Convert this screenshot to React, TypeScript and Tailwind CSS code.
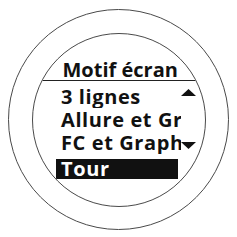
import type { ReactNode } from "react";

function UpArrow() {
  return (
    <svg width="15" height="7" viewBox="0 0 15 7" className="block">
      <polygon points="7.5,0 15,7 0,7" fill="#111" />
    </svg>
  );
}

function DownArrow() {
  return (
    <svg width="15" height="7" viewBox="0 0 15 7" className="block">
      <polygon points="0,0 15,0 7.5,7" fill="#111" />
    </svg>
  );
}

function Row({ label, arrow }: { label: string; arrow?: ReactNode }) {
  return (
    <div className="flex h-[23px]">
      <div className="w-[125px] overflow-hidden whitespace-nowrap pl-[5px] leading-[23px] tracking-[0.6px]">{label}</div>
      <div className="flex w-[16px] flex-col">{arrow}</div>
    </div>
  );
}

export default function App() {
  return (
    <div
      className="h-[237px] w-[237px] bg-white pl-[8px] pt-[9px] text-[#111]"
      style={{ fontFamily: '"Open Sans", "DejaVu Sans", sans-serif' }}
    >
      <div className="flex h-[221px] w-[221px] items-center justify-center rounded-full border-[1.5px] border-[#4a4a4a]">
        <div className="h-[174px] w-[174px] overflow-hidden rounded-full border-[1.5px] border-[#4a4a4a]">
          <div className="flex flex-col pt-[25px] text-[20px] font-bold">
            <div className="h-[21px] pl-[30px] leading-[21px]">Motif écran</div>
            <div className="h-[1.5px] w-full bg-[#222]" />
            <div className="mt-[3.5px] flex flex-col pl-[23.5px]">
              <Row
                label="3 lignes"
                arrow={
                  <div className="mt-[4px]">
                    <UpArrow />
                  </div>
                }
              />
              <Row label="Allure et Graphique" />
              <Row
                label="FC et Graphique"
                arrow={
                  <div className="mt-auto mb-[5px]">
                    <DownArrow />
                  </div>
                }
              />
              <div className="mt-[5px] h-[20px] w-[122px] bg-[#111] pl-[5px] leading-[20px] tracking-[0.6px] text-white">
                Tour
              </div>
            </div>
          </div>
        </div>
      </div>
    </div>
  );
}
